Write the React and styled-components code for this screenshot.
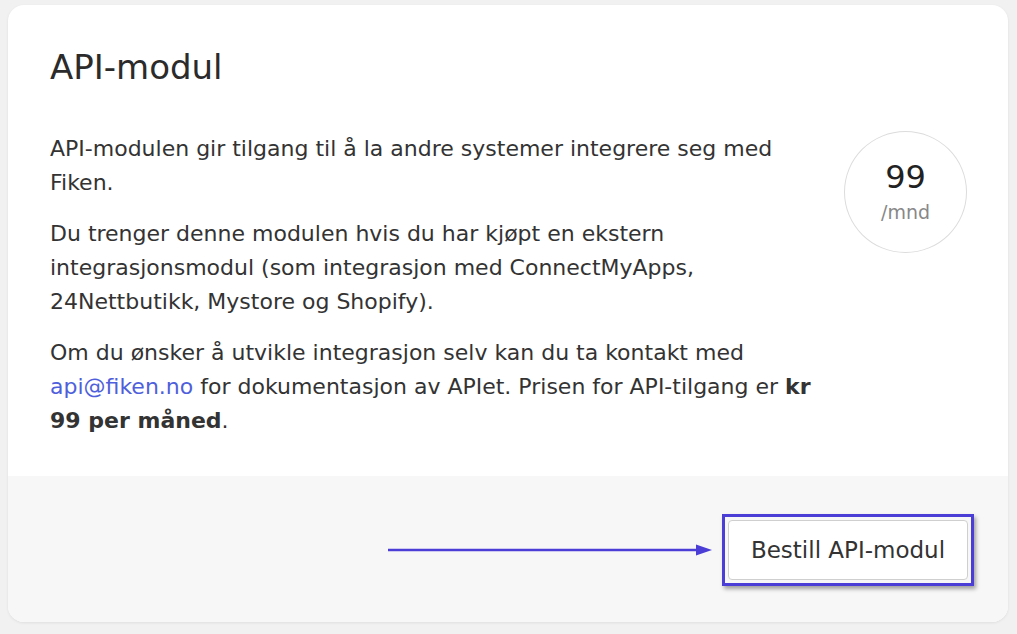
import React from "react";
import styled, { createGlobalStyle } from "styled-components";

const Global = createGlobalStyle`
  html, body { margin: 0; padding: 0; background: #f1f1f1; }
  body { font-family: "DejaVu Sans", Verdana, sans-serif; color: #333; }
`;

const Page = styled.div`
  padding: 5px 9px 12px 8px;
`;

const Card = styled.section`
  background: #fff;
  border-radius: 16px;
  box-shadow: 0 1px 3px rgba(0, 0, 0, 0.08);
  overflow: hidden;
  height: 617px;
  display: flex;
  flex-direction: column;
`;

const Body = styled.div`
  padding: 42px 41px 0 42px;
  height: 471px;
  box-sizing: border-box;
`;

const Title = styled.h2`
  margin: 0 0 45px;
  font-size: 34px;
  font-weight: 400;
  line-height: 40px;
  color: #2b2b2b;
`;

const Row = styled.div`
  display: flex;
  justify-content: space-between;
  align-items: flex-start;
`;

const Text = styled.div`
  width: 785px;
  font-size: 22px;
  line-height: 34px;
  color: #333;
  p { margin: 0 0 17px; }
`;

const Link = styled.a`
  color: #4f5fdc;
  text-decoration: none;
`;

const Circle = styled.div`
  margin-top: -1px;
  width: 123px;
  height: 122px;
  border: 1px solid #dcdcdc;
  border-radius: 50%;
  box-sizing: border-box;
  display: flex;
  flex-direction: column;
  align-items: center;
  justify-content: center;
  flex-shrink: 0;
`;

const Price = styled.div`
  font-size: 32px;
  line-height: 32px;
  color: #222;
`;

const Unit = styled.div`
  font-size: 19px;
  line-height: 22px;
  color: #888;
  margin-top: 8px;
`;

const Footer = styled.div`
  flex: 1;
  background: #f7f7f7;
  display: flex;
  align-items: center;
  justify-content: flex-end;
  padding: 2px 34px 0 0;
  gap: 10px;
`;

const Highlight = styled.span`
  display: inline-flex;
  border: 3px solid #4b3ed6;
  padding: 3px;
  box-shadow: 2px 3px 4px rgba(0, 0, 0, 0.35);
`;

const Button = styled.button`
  width: 240px;
  height: 60px;
  background: #fff;
  border: 1px solid #cfcfcf;
  border-radius: 4px;
  font-family: inherit;
  font-size: 23px;
  color: #333;
  cursor: pointer;
  padding: 0;
`;

export default function App() {
  return (
    <>
      <Global />
      <Page>
        <Card>
          <Body>
            <Title>API-modul</Title>
            <Row>
              <Text>
                <p>
                  API-modulen gir tilgang til å la andre systemer integrere seg med Fiken.
                </p>
                <p>
                  Du trenger denne modulen hvis du har kjøpt en ekstern integrasjonsmodul (som
                  integrasjon med ConnectMyApps, 24Nettbutikk, Mystore og Shopify).
                </p>
                <p>
                  Om du ønsker å utvikle integrasjon selv kan du ta kontakt med{" "}
                  <Link href="#">api@fiken.no</Link> for dokumentasjon av APIet. Prisen for
                  API-tilgang er <b>kr 99 per måned</b>.
                </p>
              </Text>
              <Circle>
                <Price>99</Price>
                <Unit>/mnd</Unit>
              </Circle>
            </Row>
          </Body>
          <Footer>
            <svg width="324" height="14" viewBox="0 0 324 14">
              <line x1="0" y1="7" x2="310" y2="7" stroke="#4b3ed6" strokeWidth="2.5" />
              <polygon points="308,1.5 324,7 308,12.5" fill="#4b3ed6" />
            </svg>
            <Highlight>
              <Button>Bestill API-modul</Button>
            </Highlight>
          </Footer>
        </Card>
      </Page>
    </>
  );
}
